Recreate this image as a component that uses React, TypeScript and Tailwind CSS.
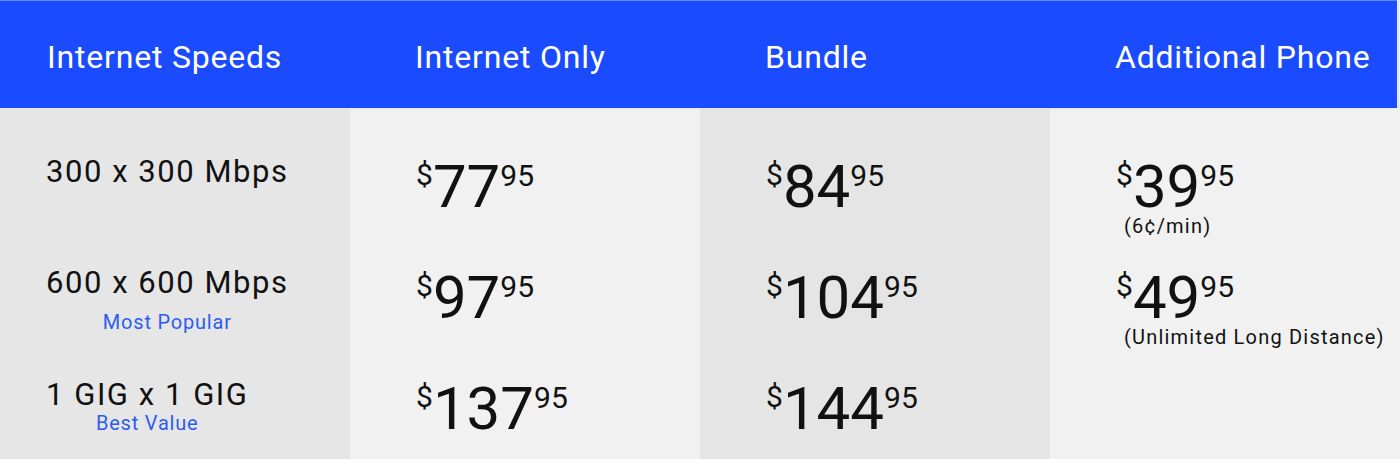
import React from "react";

const Price = ({ dollars, cents }: { dollars: string; cents: string }) => (
  <div className="flex items-start leading-none text-[#111111]">
    <span className="text-[30px] leading-none mt-[3px]">$</span>
    <span className="text-[60px] leading-none">{dollars}</span>
    <span className="text-[30px] leading-none mt-[4px]">{cents}</span>
  </div>
);

const Header = ({ label, first }: { label: string; first?: boolean }) => (
  <div
    className={`h-[108px] bg-[#1b4bfe] border-t border-[#6688ff] pt-[36px] text-white text-[32px] leading-[40px] tracking-wide ${
      first ? "pl-[47px]" : "pl-[65px]"
    }`}
  >
    {label}
  </div>
);

const Speed = ({ text, sub, subGap }: { text: string; sub?: string; subGap?: string }) => (
  <div className="inline-flex flex-col items-center">
    <div className="text-[31px] leading-[36px] tracking-[0.05em] text-[#111111]">{text}</div>
    {sub && (
      <div className={`text-[20px] leading-[24px] tracking-[0.04em] text-[#2d5cf0] ${subGap}`}>{sub}</div>
    )}
  </div>
);

export default function App() {
  return (
    <div className="w-[1400px] h-[468px] bg-white" style={{ fontFamily: "Roboto, 'Liberation Sans', sans-serif" }}>
      <div className="grid grid-cols-4">
        {/* Column 1 */}
        <div className="flex flex-col">
          <Header label="Internet Speeds" first />
          <div className="h-px bg-[#e3e8f7]" />
          <div className="h-[350px] bg-[#e6e6e6] pl-[46px] pt-[45px] flex flex-col">
            <div className="h-[111px]">
              <Speed text="300 x 300 Mbps" />
            </div>
            <div className="h-[112px]">
              <Speed text="600 x 600 Mbps" sub="Most Popular" subGap="mt-[9px]" />
            </div>
            <div>
              <Speed text="1 GIG x 1 GIG" sub="Best Value" subGap="-mt-[2px]" />
            </div>
          </div>
        </div>

        {/* Column 2 */}
        <div className="flex flex-col">
          <Header label="Internet Only" />
          <div className="h-px bg-[#e3e8f7]" />
          <div className="h-[350px] bg-[#f1f1f1] pl-[66px] pt-[48px] flex flex-col">
            <div className="h-[111px]">
              <Price dollars="77" cents="95" />
            </div>
            <div className="h-[111px]">
              <Price dollars="97" cents="95" />
            </div>
            <div>
              <Price dollars="137" cents="95" />
            </div>
          </div>
        </div>

        {/* Column 3 */}
        <div className="flex flex-col">
          <Header label="Bundle" />
          <div className="h-px bg-[#e3e8f7]" />
          <div className="h-[350px] bg-[#e5e5e5] pl-[66px] pt-[48px] flex flex-col">
            <div className="h-[111px]">
              <Price dollars="84" cents="95" />
            </div>
            <div className="h-[111px]">
              <Price dollars="104" cents="95" />
            </div>
            <div>
              <Price dollars="144" cents="95" />
            </div>
          </div>
        </div>

        {/* Column 4 */}
        <div className="flex flex-col">
          <div className="border-r-[3px] border-[#e6eaf6]">
            <Header label="Additional Phone" />
          </div>
          <div className="h-px bg-[#e3e8f7]" />
          <div className="h-[350px] bg-[#f1f1f1] pl-[66px] pt-[48px] flex flex-col">
            <div className="h-[111px]">
              <Price dollars="39" cents="95" />
              <div className="ml-[8px] -mt-[3px] text-[20px] leading-[24px] tracking-[0.06em] text-[#111111]">(6¢/min)</div>
            </div>
            <div className="h-[111px]">
              <Price dollars="49" cents="95" />
              <div className="ml-[8px] -mt-[3px] text-[20px] leading-[24px] tracking-[0.06em] text-[#111111] whitespace-nowrap">
                (Unlimited Long Distance)
              </div>
            </div>
          </div>
        </div>
      </div>
    </div>
  );
}
